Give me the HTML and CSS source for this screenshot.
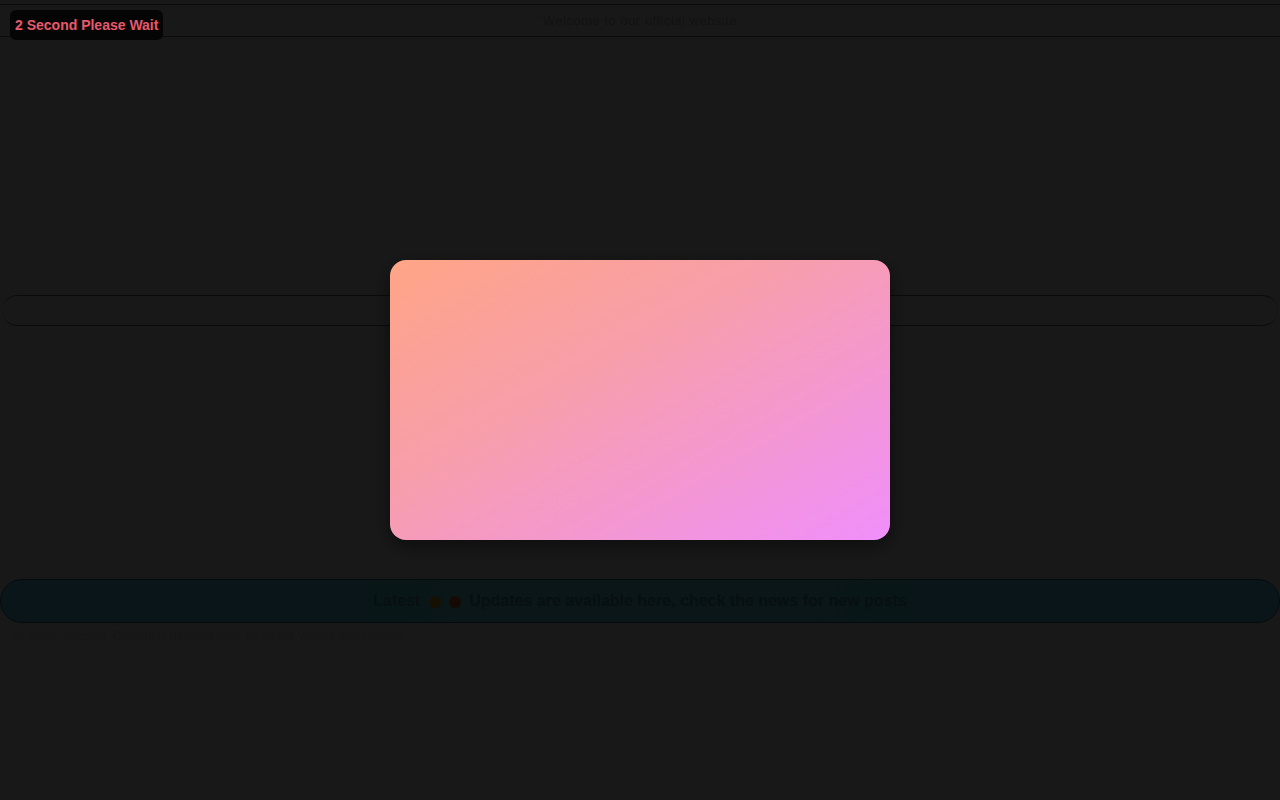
FILE: index.html
```html
<!DOCTYPE html>
<html lang="en">
<head>
<meta charset="utf-8">
<title>Please Wait</title>
<link rel="stylesheet" href="styles.css">
</head>
<body>
  <div class="page">
    <header class="topbar">
      <span class="topbar-text">Welcome to our official website</span>
    </header>
    <div class="spacer-top"></div>
    <div class="search-bar"></div>
    <div class="spacer-mid"></div>
    <div class="notice-bar">
      <span class="notice-text">Latest <i class="dot dot-a"></i><i class="dot dot-b"></i> Updates are available here, check the news for new posts</span>
    </div>
    <p class="footnote">All rights reserved. Content is updated daily for all our visitors and readers.</p>
  </div>

  <div class="overlay">
    <div class="modal"></div>
  </div>

  <div class="wait-badge">2 Second Please Wait</div>
</body>
</html>
```

FILE: styles.css
```css
* { box-sizing: border-box; }

html, body {
  margin: 0;
  padding: 0;
  height: 100%;
}

body {
  background: #f2f2f2;
  font-family: "Liberation Sans", Arial, sans-serif;
  overflow: hidden;
}

.page {
  display: flex;
  flex-direction: column;
  padding-top: 4px;
}

.topbar {
  height: 33px;
  border-top: 1px solid #6a6a6a;
  border-bottom: 1px solid #6a6a6a;
  display: flex;
  align-items: center;
  justify-content: center;
}

.topbar-text {
  font-size: 13px;
  color: #b4b4b4;
  letter-spacing: 0.5px;
}

.spacer-top { height: 258px; }

.search-bar {
  margin: 0 2px;
  height: 31px;
  border-top: 1px solid #6a6a6a;
  border-bottom: 1px solid #6a6a6a;
  border-radius: 16px;
  background: #f4f4f4;
}

.spacer-mid { height: 253px; }

.notice-bar {
  height: 44px;
  border-radius: 22px;
  background: linear-gradient(90deg, #5bcff0, #66e0ef 50%, #5bcff0);
  border: 1px solid #2a6e80;
  display: flex;
  align-items: center;
  justify-content: center;
}

.notice-text {
  font-size: 16px;
  font-weight: bold;
  color: #4296a8;
}

.dot {
  display: inline-block;
  width: 12px;
  height: 12px;
  border-radius: 50%;
  vertical-align: middle;
  margin: 0 4px;
}
.dot-a { background: #e0a020; }
.dot-b { background: #e06020; }

.footnote {
  margin: 6px 0 0 10px;
  font-size: 12px;
  color: #dadada;
}

.overlay {
  position: fixed;
  inset: 0;
  background: rgba(0, 0, 0, 0.9);
  display: flex;
  align-items: center;
  justify-content: center;
}

.modal {
  width: 500px;
  height: 280px;
  border-radius: 16px;
  background: linear-gradient(150deg, #ffa586 0%, #f79eab 40%, #f08ffb 100%);
  box-shadow: 0 6px 20px rgba(0, 0, 0, 0.5);
}

.wait-badge {
  position: fixed;
  top: 10px;
  left: 10px;
  height: 30px;
  padding: 0 5px;
  display: flex;
  align-items: center;
  background: #050505;
  border-radius: 6px;
  color: #e8596c;
  font-size: 14px;
  font-weight: bold;
}
```
